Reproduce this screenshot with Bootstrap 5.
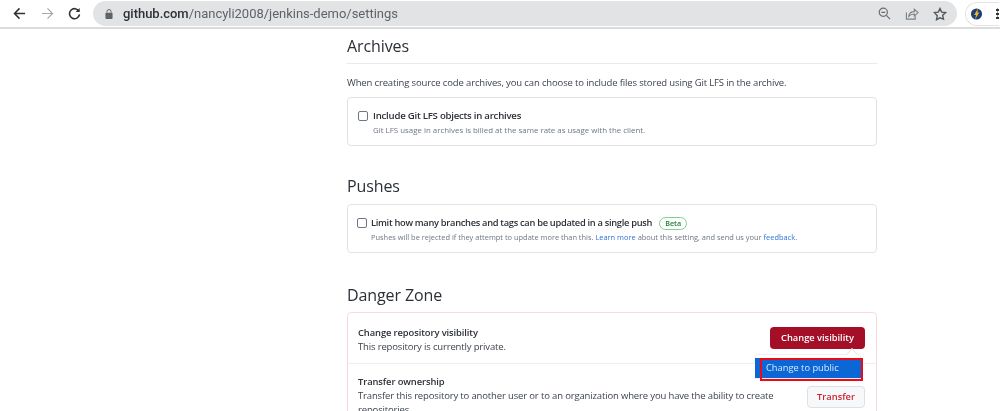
<!DOCTYPE html>
<html lang="en">
<head>
<meta charset="utf-8">
<title>Settings</title>
<link href="https://cdn.jsdelivr.net/npm/bootstrap@5.3.0/dist/css/bootstrap.min.css" rel="stylesheet">
<style>
html,body{height:411px;overflow:hidden;background:#fff}
body{font-family:"Open Sans","Liberation Sans",sans-serif;color:#2b3036;filter:blur(.35px)}
.chrome-bar{height:29px;border-bottom:2px solid #dcdcdc;padding-left:13px;overflow:hidden}
.nav-ico{width:13px;height:13px;flex:none}
.nav-gap{margin-left:14.500px}
.omni{width:864px;height:25px;background:#e2e3e5;border-radius:13px;margin-left:12px;padding:0 10px 0 12px;flex:none}
.omni-url{font-family:Roboto,sans-serif;font-size:13px;letter-spacing:-.02px;color:#5f6368;margin-left:10px}
.omni-url b{font-weight:500;color:#2d3135}
.omni-tools{gap:14px}
.ext{height:24px;border:1px solid #e4e4e4;border-right:0;border-radius:13px 0 0 13px;margin-left:8px;padding-left:4px;flex:none;gap:13px}
.dot-col{width:3px;height:11px;background:radial-gradient(circle,#333 1.400px,transparent 1.600px) 0 0/3px 4px}
.page-col{width:530px;margin-left:347px}
.sec-title{font-size:16px;font-weight:400;line-height:24px;margin:0;letter-spacing:-.1px}
.title-a{padding-top:5px;padding-bottom:5px;border-bottom:1px solid #e8eaed}
.intro{font-size:9.500px;letter-spacing:-.14px;line-height:14px;margin:12px 0 7px;color:#3d444c}
.boxy{border:1px solid #dfe3e8;border-radius:4px;height:49px;padding:10px 10px;display:flex;gap:5px}
.boxy-b{gap:4px;padding-left:9px}
.fake-check{width:10px;height:10px;border:1px solid #6e7781;border-radius:2px;flex:none;margin-top:3px}
.chk-label{font-size:9.600px;letter-spacing:-.23px;font-weight:600;line-height:15px;white-space:nowrap}
.boxy-b .chk-label{font-size:9.300px;letter-spacing:-.3px}
.chk-note{font-size:7.900px;line-height:11px;margin-top:2px;color:#6e7781;white-space:nowrap}
.boxy-b .chk-note{font-size:7.440px}
.chk-note a{color:#2f73d8;text-decoration:none}
.beta-pill{display:inline-block;font-size:7.200px;letter-spacing:0;font-weight:600;line-height:11px;border:1px solid #7fcf95;border-radius:7px;padding:0 5px;color:#1f7f3b;margin-left:5px}
.title-p{margin-top:28px;margin-bottom:6px}
.title-d{margin-top:30px;margin-bottom:5px}
.danger{border:1px solid #fbd9dc;border-radius:4px;position:relative;height:140px}
.dz-row{padding:11px 11px 0 10px;display:flex;justify-content:space-between}
.dz-first{height:51px;border-bottom:1px solid #eceef1;padding-top:13px}
.dz-title{font-size:9.400px;letter-spacing:-.1px;font-weight:600;line-height:14px}
.dz-text{font-size:9.500px;letter-spacing:-.15px;line-height:14px;color:#3d444c}
.dz-long{width:420px}
.btn-vis{background:#a40e26;color:#fff;font-size:9.300px;font-weight:600;width:95px;height:22px;border-radius:4px;border:0;padding:0;margin-top:1px;flex:none;white-space:nowrap}
.btn-trans{background:#f6f8fa;color:#cf222e;font-size:9.300px;font-weight:600;width:58px;height:22px;border-radius:4px;border:1px solid #dde1e5;padding:0;margin-top:11px;flex:none;white-space:nowrap}
.pop-shell{position:absolute;left:407px;top:41px;width:106px;height:25px;background:#fff;border:1px solid #eceef1;border-radius:3px 3px 0 0;padding-top:3px}
.pop-shell::before{content:"";position:absolute;right:4px;top:-5px;width:8px;height:8px;background:#fff;border-left:1px solid #e4e6e9;border-top:1px solid #e4e6e9;transform:rotate(45deg)}
.pop-menu{position:relative;background:#0b66d6;color:#dbeafe;font-size:9.300px;line-height:20px;height:20px;padding-left:11px;margin:0 -1px 0 -1px}
.red-mark{position:absolute;left:412px;top:45px;width:103px;height:23px;border:2px solid #ee0a14}
</style>
</head>
<body>
<div class="chrome-bar d-flex align-items-center">
  <svg class="nav-ico" viewBox="0 0 14 14" fill="none" stroke="#2f3236" stroke-width="1.600"><path d="M13 7H2M7 1.500 1.600 7 7 12.500"/></svg>
  <svg class="nav-ico nav-gap" viewBox="0 0 14 14" fill="none" stroke="#a6a8ab" stroke-width="1.300"><path d="M1 7h11M7 1.500 12.400 7 7 12.500"/></svg>
  <svg class="nav-ico nav-gap" viewBox="0 0 14 14" fill="none" stroke="#2f3236" stroke-width="1.700"><path d="M11.800 4.600A5.400 5.400 0 1 0 12.400 8"/><path d="M12.600 1v4.400H8.200z" stroke="none" fill="#2f3236"/></svg>
  <div class="omni d-flex align-items-center">
    <svg width="8" height="10" viewBox="0 0 9 11" fill="#5f6368"><rect x="0.500" y="4" width="8" height="7" rx="1"/><path d="M2.200 4V2.800a2.300 2.300 0 0 1 4.600 0V4" fill="none" stroke="#5f6368" stroke-width="1.100"/></svg>
    <span class="omni-url"><b>github.com</b>/nancyli2008/jenkins-demo/settings</span>
    <div class="d-flex align-items-center omni-tools ms-auto">
      <svg width="13" height="13" viewBox="0 0 14 14" fill="none" stroke="#6a6d70" stroke-width="1.300"><circle cx="5.700" cy="5.700" r="4.400"/><path d="M9 9l4 4M3.600 5.700h4.200"/></svg>
      <svg width="14" height="13" viewBox="0 0 15 14" fill="none" stroke="#7d8083" stroke-width="1.200"><path d="M1.500 6v7h9.500V10"/><path d="M4 10c.4-3.400 3-5 6-5V2.400l4 3.600-4 3.600V7.500c-2.500 0-4.500.8-6 2.500z"/></svg>
      <svg width="14" height="14" viewBox="0 0 14 14" fill="none" stroke="#55585b" stroke-width="1.400"><path d="M7 1.500l1.700 3.600 3.900.5-2.900 2.700.8 3.900L7 10.800l-3.500 1.900.8-3.900L1.400 5.600l3.900-.5z"/></svg>
    </div>
  </div>
  <div class="ext d-flex align-items-center">
    <svg width="13" height="14" viewBox="0 0 14 14"><circle cx="7" cy="7" r="6" fill="#1d3f7a"/><path d="M8.500 1 4.500 8h2l-1 5 4.500-7.500H8z" fill="#f3b51c"/></svg>
    <span class="dot-col"></span>
  </div>
</div>

<div class="page-col">
  <h2 class="sec-title title-a">Archives</h2>
  <p class="intro">When creating source code archives, you can choose to include files stored using Git LFS in the archive.</p>
  <div class="boxy">
    <span class="fake-check"></span>
    <div>
      <div class="chk-label">Include Git LFS objects in archives</div>
      <div class="chk-note">Git LFS usage in archives is billed at the same rate as usage with the client.</div>
    </div>
  </div>

  <h2 class="sec-title title-p">Pushes</h2>
  <div class="boxy boxy-b">
    <span class="fake-check"></span>
    <div>
      <div class="chk-label">Limit how many branches and tags can be updated in a single push <span class="beta-pill">Beta</span></div>
      <div class="chk-note">Pushes will be rejected if they attempt to update more than this. <a href="#">Learn more</a> about this setting, and send us your <a href="#">feedback</a>.</div>
    </div>
  </div>

  <h2 class="sec-title title-d">Danger Zone</h2>
  <div class="danger">
    <div class="dz-row dz-first">
      <div>
        <div class="dz-title">Change repository visibility</div>
        <div class="dz-text">This repository is currently private.</div>
      </div>
      <button type="button" class="btn btn-vis">Change visibility</button>
    </div>
    <div class="dz-row">
      <div>
        <div class="dz-title">Transfer ownership</div>
        <div class="dz-text dz-long">Transfer this repository to another user or to an organization where you have the ability to create repositories.</div>
      </div>
      <button type="button" class="btn btn-trans">Transfer</button>
    </div>
    <div class="pop-shell"><div class="pop-menu">Change to public</div></div>
    <div class="red-mark"></div>
  </div>
</div>
</body>
</html>
